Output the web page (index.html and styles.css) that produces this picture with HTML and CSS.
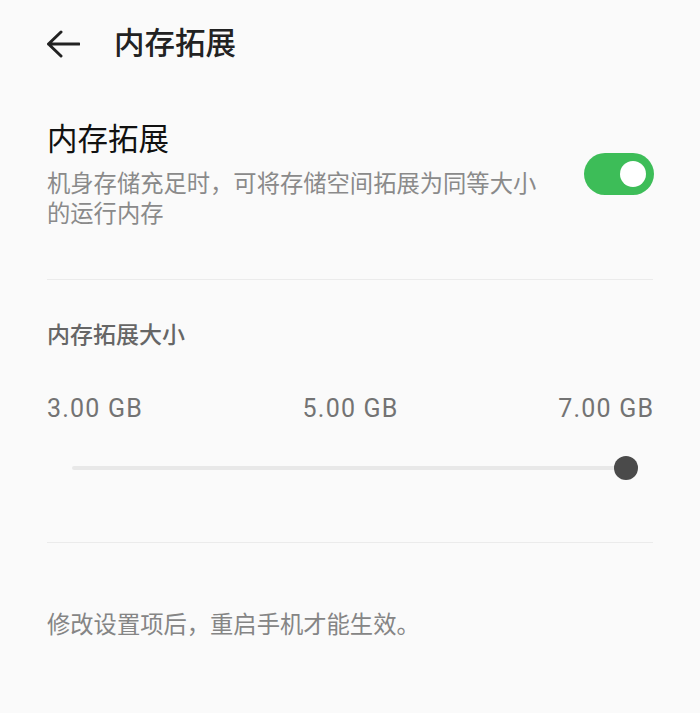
FILE: index.html
```html
<!DOCTYPE html>
<html lang="zh-CN">
<head>
    <meta charset="UTF-8">
    <meta name="viewport" content="width=device-width, initial-scale=1.0">
    <title>内存拓展</title>
    <link rel="stylesheet" href="styles.css">
</head>
<body>
    <header class="topbar">
        <svg class="back" width="36" height="28" viewBox="0 0 36 28">
            <path d="M17 2 L4.5 14 L17 26 M4.5 14 H35" fill="none" stroke="#222" stroke-width="3" stroke-linecap="round" stroke-linejoin="round"/>
        </svg>
        <h1>内存拓展</h1>
    </header>
    <main class="content">
        <div class="switch-row">
            <div class="switch-text">
                <h2>内存拓展</h2>
                <p>机身存储充足时，可将存储空间拓展为同等大小的运行内存</p>
            </div>
            <div class="toggle"><span class="toggle-knob"></span></div>
        </div>
        <div class="divider"></div>
        <h3 class="label">内存拓展大小</h3>
        <div class="values">
            <span>3.00 GB</span>
            <span>5.00 GB</span>
            <span>7.00 GB</span>
        </div>
        <div class="slider">
            <div class="track"></div>
            <div class="thumb"></div>
        </div>
        <div class="divider lower"></div>
        <p class="note">修改设置项后，重启手机才能生效。</p>
    </main>
</body>
</html>
```

FILE: styles.css
```css
* {
    margin: 0;
    padding: 0;
    box-sizing: border-box;
}
body {
    background: #fafafa;
    font-family: Roboto, "Noto Sans CJK SC", sans-serif;
    color: #222;
}
.topbar {
    display: flex;
    align-items: center;
    height: 88px;
    padding-left: 44px;
}
.back {
    margin-right: 34px;
}
.topbar h1 {
    font-size: 30.5px;
    font-weight: 500;
    line-height: 40px;
    color: #222;
}
.content {
    padding: 0 47px;
}
.switch-row {
    display: flex;
    align-items: center;
    justify-content: space-between;
    margin-top: 32px;
}
.switch-text {
    width: 495px;
}
.switch-text h2 {
    font-size: 30.5px;
    font-weight: 400;
    line-height: 40px;
    color: #111;
    margin-bottom: 9px;
}
.switch-text p {
    font-size: 23.3px;
    line-height: 30px;
    color: #8a8a8a;
}
.toggle {
    display: flex;
    align-items: center;
    justify-content: flex-end;
    width: 70px;
    height: 42px;
    padding: 0 8px;
    border-radius: 21px;
    background: #3dbd58;
    margin-right: -1px;
    margin-top: -2px;
}
.toggle-knob {
    width: 26px;
    height: 26px;
    border-radius: 50%;
    background: #fff;
}
.divider {
    height: 1px;
    background: #ebebeb;
    margin-top: 50px;
}
.label {
    margin-top: 41px;
    font-size: 23px;
    font-weight: 500;
    line-height: 30px;
    color: #666;
}
.values {
    display: flex;
    justify-content: space-between;
    margin-top: 43px;
    font-size: 25px;
    letter-spacing: 1.2px;
    line-height: 30px;
    color: #737373;
}
.values span:last-child {
    margin-right: -1.2px;
}
.slider {
    display: flex;
    align-items: center;
    height: 24px;
    margin-top: 32px;
    padding: 0 15px 0 25px;
}
.track {
    flex: 1;
    height: 4px;
    border-radius: 2px;
    background: #e8e8e8;
}
.thumb {
    width: 24px;
    height: 24px;
    margin-left: -12px;
    border-radius: 50%;
    background: #4a4a4a;
}
.divider.lower {
    margin-top: 62px;
}
.note {
    margin-top: 67px;
    font-size: 23.3px;
    line-height: 30px;
    color: #858585;
}
```
